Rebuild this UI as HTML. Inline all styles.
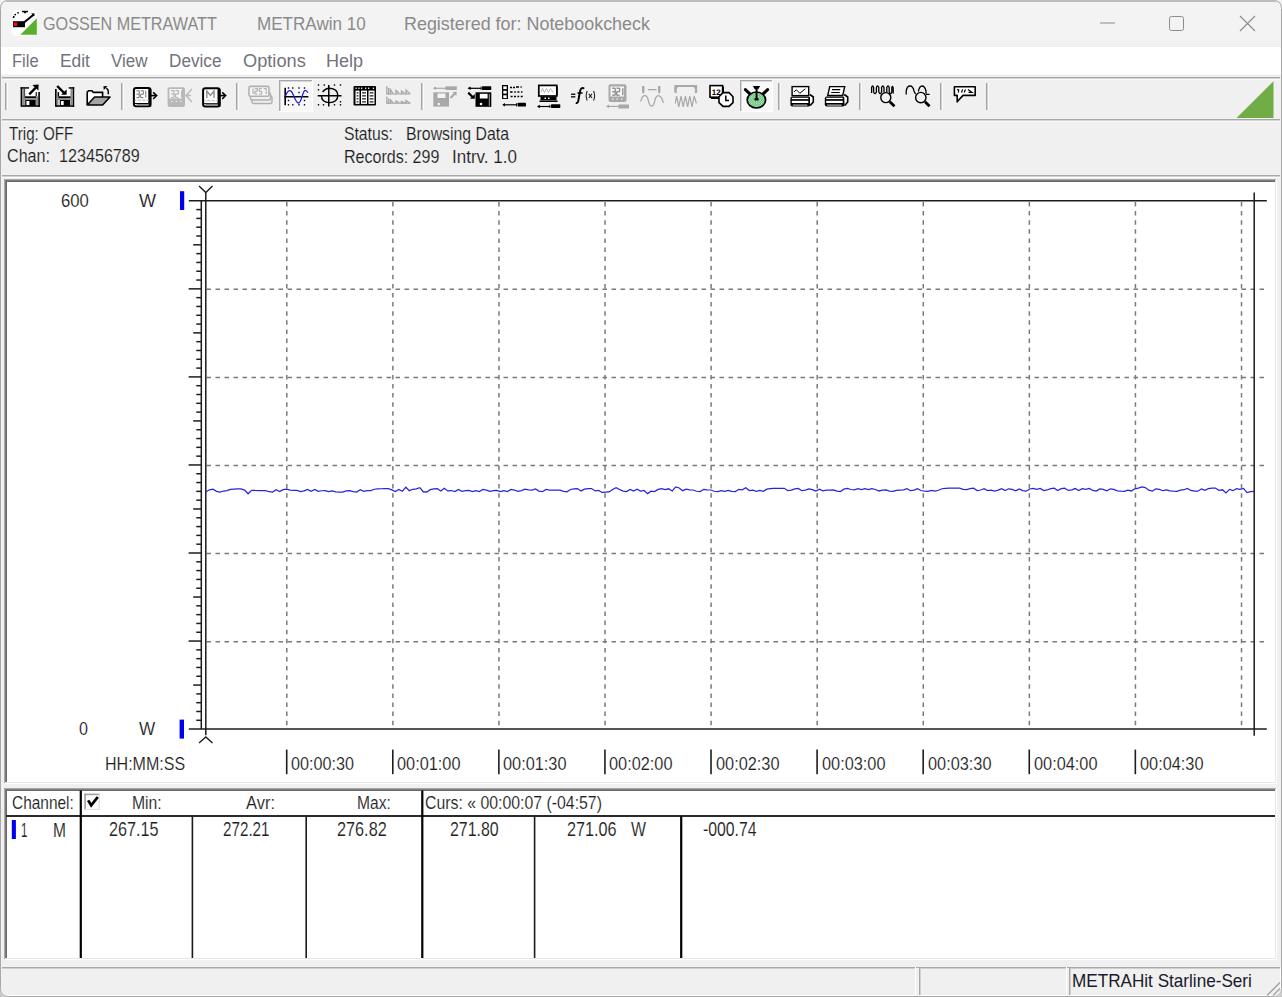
<!DOCTYPE html>
<html><head><meta charset="utf-8"><style>
html,body{margin:0;padding:0;width:1282px;height:997px;overflow:hidden;background:#f0f0f0}
.t{position:absolute;font-family:"Liberation Sans", sans-serif;line-height:1;white-space:pre;transform-origin:0 0}
svg{position:absolute;left:0;top:0}
</style></head><body>
<svg width="1282" height="997" viewBox="0 0 1282 997" shape-rendering="crispEdges"><rect x="0" y="0" width="1282" height="47" fill="#f3f3f3"/><rect x="0" y="41" width="1282" height="1" fill="#f0f0f0"/><rect x="0" y="43" width="1282" height="4" fill="#f1f1f1"/><rect x="0" y="47" width="1282" height="27" fill="#ffffff"/><rect x="0" y="74" width="1282" height="1" fill="#f8f8f8"/><rect x="0" y="75" width="1282" height="2" fill="#eeeeee"/><rect x="0" y="77" width="1282" height="920" fill="#f0f0f0"/><rect x="2" y="77" width="1278" height="1" fill="#a8a8a8"/><rect x="2" y="78" width="1278" height="1" fill="#d4d4d4"/><rect x="2" y="79" width="1278" height="1" fill="#fafafa"/><rect x="2" y="119" width="1278" height="1" fill="#a8a8a8"/><rect x="2" y="120" width="1278" height="1" fill="#d4d4d4"/><rect x="2" y="121" width="1278" height="1" fill="#fafafa"/><rect x="2" y="175" width="1278" height="1" fill="#a8a8a8"/><rect x="2" y="176" width="1278" height="1" fill="#d4d4d4"/><rect x="2" y="177" width="1278" height="1" fill="#fafafa"/><rect x="5" y="83" width="1" height="27" fill="#a4a4a4"/><rect x="6" y="83" width="1" height="27" fill="#d0d0d0"/><rect x="7" y="83" width="1" height="27" fill="#fbfbfb"/><rect x="121" y="83" width="1" height="27" fill="#a4a4a4"/><rect x="122" y="83" width="1" height="27" fill="#d0d0d0"/><rect x="123" y="83" width="1" height="27" fill="#fbfbfb"/><rect x="236" y="83" width="1" height="27" fill="#a4a4a4"/><rect x="237" y="83" width="1" height="27" fill="#d0d0d0"/><rect x="238" y="83" width="1" height="27" fill="#fbfbfb"/><rect x="421" y="83" width="1" height="27" fill="#a4a4a4"/><rect x="422" y="83" width="1" height="27" fill="#d0d0d0"/><rect x="423" y="83" width="1" height="27" fill="#fbfbfb"/><rect x="778" y="83" width="1" height="27" fill="#a4a4a4"/><rect x="779" y="83" width="1" height="27" fill="#d0d0d0"/><rect x="780" y="83" width="1" height="27" fill="#fbfbfb"/><rect x="859" y="83" width="1" height="27" fill="#a4a4a4"/><rect x="860" y="83" width="1" height="27" fill="#d0d0d0"/><rect x="861" y="83" width="1" height="27" fill="#fbfbfb"/><rect x="940" y="83" width="1" height="27" fill="#a4a4a4"/><rect x="941" y="83" width="1" height="27" fill="#d0d0d0"/><rect x="942" y="83" width="1" height="27" fill="#fbfbfb"/><rect x="986" y="83" width="1" height="27" fill="#a4a4a4"/><rect x="987" y="83" width="1" height="27" fill="#d0d0d0"/><rect x="988" y="83" width="1" height="27" fill="#fbfbfb"/><rect x="279" y="80" width="33" height="31" fill="#f8f8f8"/><rect x="279" y="80" width="33" height="1" fill="#a8a8a8"/><rect x="279" y="80" width="1" height="31" fill="#a8a8a8"/><rect x="280" y="81" width="32" height="1" fill="#d8d8d8"/><rect x="280" y="81" width="1" height="30" fill="#d8d8d8"/><rect x="312" y="80" width="1" height="32" fill="#ffffff"/><rect x="279" y="111" width="33" height="1" fill="#ffffff"/><rect x="740" y="80" width="32" height="31" fill="#f8f8f8"/><rect x="740" y="80" width="32" height="1" fill="#a8a8a8"/><rect x="740" y="80" width="1" height="31" fill="#a8a8a8"/><rect x="741" y="81" width="31" height="1" fill="#d8d8d8"/><rect x="741" y="81" width="1" height="30" fill="#d8d8d8"/><rect x="772" y="80" width="1" height="32" fill="#ffffff"/><rect x="740" y="111" width="32" height="1" fill="#ffffff"/><polygon points="1236.5,118 1273.5,81.2 1273.5,118" fill="#70ad47" shape-rendering="auto"/><rect x="4" y="179" width="1273" height="605" fill="#ffffff"/><rect x="5" y="180" width="1271" height="603" fill="#e6e6e6"/><rect x="4" y="179" width="1272" height="1" fill="#a8a8a8"/><rect x="4" y="179" width="1" height="604" fill="#a8a8a8"/><rect x="5" y="180" width="1270" height="1" fill="#7c7c7c"/><rect x="5" y="180" width="1" height="602" fill="#7c7c7c"/><rect x="6" y="181" width="1269" height="1" fill="#6a6a6a"/><rect x="6" y="181" width="1" height="601" fill="#6a6a6a"/><rect x="7" y="182" width="1268" height="600" fill="#ffffff"/><rect x="4" y="788" width="1273" height="172" fill="#ffffff"/><rect x="5" y="789" width="1271" height="170" fill="#e6e6e6"/><rect x="4" y="788" width="1272" height="1" fill="#a8a8a8"/><rect x="4" y="788" width="1" height="171" fill="#a8a8a8"/><rect x="5" y="789" width="1270" height="1" fill="#7c7c7c"/><rect x="5" y="789" width="1" height="169" fill="#7c7c7c"/><rect x="6" y="790" width="1269" height="1" fill="#6a6a6a"/><rect x="6" y="790" width="1" height="168" fill="#6a6a6a"/><rect x="7" y="791" width="1268" height="167" fill="#ffffff"/><rect x="2" y="967" width="1278" height="1" fill="#a8a8a8"/><rect x="2" y="967" width="913" height="1" fill="#a8a8a8"/><rect x="2" y="968" width="913" height="1" fill="#d0d0d0"/><rect x="915" y="967" width="1" height="29" fill="#ffffff"/><rect x="2" y="995" width="914" height="1" fill="#ffffff"/><rect x="919" y="967" width="147" height="1" fill="#a8a8a8"/><rect x="919" y="968" width="147" height="1" fill="#d0d0d0"/><rect x="919" y="967" width="1" height="29" fill="#a8a8a8"/><rect x="920" y="968" width="1" height="28" fill="#d0d0d0"/><rect x="1066" y="967" width="1" height="29" fill="#ffffff"/><rect x="919" y="995" width="148" height="1" fill="#ffffff"/><rect x="1069" y="967" width="211" height="1" fill="#a8a8a8"/><rect x="1069" y="968" width="211" height="1" fill="#d0d0d0"/><rect x="1069" y="967" width="1" height="29" fill="#a8a8a8"/><rect x="1070" y="968" width="1" height="28" fill="#d0d0d0"/><rect x="1280" y="967" width="1" height="29" fill="#ffffff"/><rect x="1069" y="995" width="212" height="1" fill="#ffffff"/><line x1="1273" y1="995.5" x2="1280" y2="988.5" stroke="#a0a0a0" stroke-width="1.3" shape-rendering="auto"/><line x1="1267" y1="995.5" x2="1280" y2="982.5" stroke="#a0a0a0" stroke-width="1.3" shape-rendering="auto"/><path d="M0,990 V997 H7 Q0.5,996.5 0,990 Z M1282,990 V997 H1275 Q1281.5,996.5 1282,990 Z" fill="#c8c8c8" shape-rendering="auto"/><path d="M0.5,988.5 V8.5 Q0.5,0.5 8.5,0.5 H1273.5 Q1281.5,0.5 1281.5,8.5 V988.5 Q1281.5,996.5 1273.5,996.5 H8.5 Q0.5,996.5 0.5,988.5 Z" fill="none" stroke="#a8a8a8" stroke-width="1" shape-rendering="auto"/><rect x="6" y="0" width="1270" height="2" fill="#bdbdbd"/></svg>
<svg width="1282" height="997" viewBox="0 0 1282 997"><line x1="206.5" y1="289.29999999999995" x2="1266.5" y2="289.29999999999995" stroke="#7a7a7a" stroke-width="1.5" stroke-dasharray="4.5,4.5"/><line x1="206.5" y1="377.4" x2="1266.5" y2="377.4" stroke="#7a7a7a" stroke-width="1.5" stroke-dasharray="4.5,4.5"/><line x1="206.5" y1="465.49999999999994" x2="1266.5" y2="465.49999999999994" stroke="#7a7a7a" stroke-width="1.5" stroke-dasharray="4.5,4.5"/><line x1="206.5" y1="553.5999999999999" x2="1266.5" y2="553.5999999999999" stroke="#7a7a7a" stroke-width="1.5" stroke-dasharray="4.5,4.5"/><line x1="206.5" y1="641.7" x2="1266.5" y2="641.7" stroke="#7a7a7a" stroke-width="1.5" stroke-dasharray="4.5,4.5"/><line x1="286.8" y1="202" x2="286.8" y2="728" stroke="#7a7a7a" stroke-width="1.5" stroke-dasharray="4.5,4.6"/><line x1="392.88" y1="202" x2="392.88" y2="728" stroke="#7a7a7a" stroke-width="1.5" stroke-dasharray="4.5,4.6"/><line x1="498.96000000000004" y1="202" x2="498.96000000000004" y2="728" stroke="#7a7a7a" stroke-width="1.5" stroke-dasharray="4.5,4.6"/><line x1="605.04" y1="202" x2="605.04" y2="728" stroke="#7a7a7a" stroke-width="1.5" stroke-dasharray="4.5,4.6"/><line x1="711.12" y1="202" x2="711.12" y2="728" stroke="#7a7a7a" stroke-width="1.5" stroke-dasharray="4.5,4.6"/><line x1="817.2" y1="202" x2="817.2" y2="728" stroke="#7a7a7a" stroke-width="1.5" stroke-dasharray="4.5,4.6"/><line x1="923.28" y1="202" x2="923.28" y2="728" stroke="#7a7a7a" stroke-width="1.5" stroke-dasharray="4.5,4.6"/><line x1="1029.36" y1="202" x2="1029.36" y2="728" stroke="#7a7a7a" stroke-width="1.5" stroke-dasharray="4.5,4.6"/><line x1="1135.44" y1="202" x2="1135.44" y2="728" stroke="#7a7a7a" stroke-width="1.5" stroke-dasharray="4.5,4.6"/><line x1="1241.52" y1="202" x2="1241.52" y2="728" stroke="#7a7a7a" stroke-width="1.5" stroke-dasharray="4.5,4.6"/><line x1="188.8" y1="200.8" x2="1266.8" y2="200.8" stroke="#1c1c1c" stroke-width="1.5" /><line x1="188.8" y1="729.1" x2="1266.8" y2="729.1" stroke="#1c1c1c" stroke-width="1.5" /><line x1="201.3" y1="200.8" x2="201.3" y2="729.1" stroke="#1c1c1c" stroke-width="1.5" /><line x1="205.8" y1="192.5" x2="205.8" y2="735.3" stroke="#1c1c1c" stroke-width="1.5" /><line x1="1254.2" y1="192.6" x2="1254.2" y2="735.7" stroke="#1c1c1c" stroke-width="1.5" /><line x1="196.3" y1="209.60500000000002" x2="201.3" y2="209.60500000000002" stroke="#1c1c1c" stroke-width="1.5" /><line x1="196.3" y1="218.41000000000003" x2="201.3" y2="218.41000000000003" stroke="#1c1c1c" stroke-width="1.5" /><line x1="196.3" y1="227.215" x2="201.3" y2="227.215" stroke="#1c1c1c" stroke-width="1.5" /><line x1="196.3" y1="236.02" x2="201.3" y2="236.02" stroke="#1c1c1c" stroke-width="1.5" /><line x1="193.2" y1="244.82500000000002" x2="201.3" y2="244.82500000000002" stroke="#1c1c1c" stroke-width="1.5" /><line x1="196.3" y1="253.63" x2="201.3" y2="253.63" stroke="#1c1c1c" stroke-width="1.5" /><line x1="196.3" y1="262.435" x2="201.3" y2="262.435" stroke="#1c1c1c" stroke-width="1.5" /><line x1="196.3" y1="271.24" x2="201.3" y2="271.24" stroke="#1c1c1c" stroke-width="1.5" /><line x1="196.3" y1="280.045" x2="201.3" y2="280.045" stroke="#1c1c1c" stroke-width="1.5" /><line x1="188.6" y1="288.85" x2="201.3" y2="288.85" stroke="#1c1c1c" stroke-width="1.5" /><line x1="196.3" y1="297.655" x2="201.3" y2="297.655" stroke="#1c1c1c" stroke-width="1.5" /><line x1="196.3" y1="306.46000000000004" x2="201.3" y2="306.46000000000004" stroke="#1c1c1c" stroke-width="1.5" /><line x1="196.3" y1="315.265" x2="201.3" y2="315.265" stroke="#1c1c1c" stroke-width="1.5" /><line x1="196.3" y1="324.07" x2="201.3" y2="324.07" stroke="#1c1c1c" stroke-width="1.5" /><line x1="193.2" y1="332.875" x2="201.3" y2="332.875" stroke="#1c1c1c" stroke-width="1.5" /><line x1="196.3" y1="341.68" x2="201.3" y2="341.68" stroke="#1c1c1c" stroke-width="1.5" /><line x1="196.3" y1="350.485" x2="201.3" y2="350.485" stroke="#1c1c1c" stroke-width="1.5" /><line x1="196.3" y1="359.28999999999996" x2="201.3" y2="359.28999999999996" stroke="#1c1c1c" stroke-width="1.5" /><line x1="196.3" y1="368.095" x2="201.3" y2="368.095" stroke="#1c1c1c" stroke-width="1.5" /><line x1="188.6" y1="376.9" x2="201.3" y2="376.9" stroke="#1c1c1c" stroke-width="1.5" /><line x1="196.3" y1="385.70500000000004" x2="201.3" y2="385.70500000000004" stroke="#1c1c1c" stroke-width="1.5" /><line x1="196.3" y1="394.51" x2="201.3" y2="394.51" stroke="#1c1c1c" stroke-width="1.5" /><line x1="196.3" y1="403.315" x2="201.3" y2="403.315" stroke="#1c1c1c" stroke-width="1.5" /><line x1="196.3" y1="412.12" x2="201.3" y2="412.12" stroke="#1c1c1c" stroke-width="1.5" /><line x1="193.2" y1="420.92499999999995" x2="201.3" y2="420.92499999999995" stroke="#1c1c1c" stroke-width="1.5" /><line x1="196.3" y1="429.73" x2="201.3" y2="429.73" stroke="#1c1c1c" stroke-width="1.5" /><line x1="196.3" y1="438.53499999999997" x2="201.3" y2="438.53499999999997" stroke="#1c1c1c" stroke-width="1.5" /><line x1="196.3" y1="447.34" x2="201.3" y2="447.34" stroke="#1c1c1c" stroke-width="1.5" /><line x1="196.3" y1="456.145" x2="201.3" y2="456.145" stroke="#1c1c1c" stroke-width="1.5" /><line x1="188.6" y1="464.95" x2="201.3" y2="464.95" stroke="#1c1c1c" stroke-width="1.5" /><line x1="196.3" y1="473.755" x2="201.3" y2="473.755" stroke="#1c1c1c" stroke-width="1.5" /><line x1="196.3" y1="482.56" x2="201.3" y2="482.56" stroke="#1c1c1c" stroke-width="1.5" /><line x1="196.3" y1="491.36499999999995" x2="201.3" y2="491.36499999999995" stroke="#1c1c1c" stroke-width="1.5" /><line x1="196.3" y1="500.16999999999996" x2="201.3" y2="500.16999999999996" stroke="#1c1c1c" stroke-width="1.5" /><line x1="193.2" y1="508.975" x2="201.3" y2="508.975" stroke="#1c1c1c" stroke-width="1.5" /><line x1="196.3" y1="517.78" x2="201.3" y2="517.78" stroke="#1c1c1c" stroke-width="1.5" /><line x1="196.3" y1="526.585" x2="201.3" y2="526.585" stroke="#1c1c1c" stroke-width="1.5" /><line x1="196.3" y1="535.39" x2="201.3" y2="535.39" stroke="#1c1c1c" stroke-width="1.5" /><line x1="196.3" y1="544.1949999999999" x2="201.3" y2="544.1949999999999" stroke="#1c1c1c" stroke-width="1.5" /><line x1="188.6" y1="553.0" x2="201.3" y2="553.0" stroke="#1c1c1c" stroke-width="1.5" /><line x1="196.3" y1="561.8050000000001" x2="201.3" y2="561.8050000000001" stroke="#1c1c1c" stroke-width="1.5" /><line x1="196.3" y1="570.61" x2="201.3" y2="570.61" stroke="#1c1c1c" stroke-width="1.5" /><line x1="196.3" y1="579.415" x2="201.3" y2="579.415" stroke="#1c1c1c" stroke-width="1.5" /><line x1="196.3" y1="588.22" x2="201.3" y2="588.22" stroke="#1c1c1c" stroke-width="1.5" /><line x1="193.2" y1="597.025" x2="201.3" y2="597.025" stroke="#1c1c1c" stroke-width="1.5" /><line x1="196.3" y1="605.8299999999999" x2="201.3" y2="605.8299999999999" stroke="#1c1c1c" stroke-width="1.5" /><line x1="196.3" y1="614.635" x2="201.3" y2="614.635" stroke="#1c1c1c" stroke-width="1.5" /><line x1="196.3" y1="623.44" x2="201.3" y2="623.44" stroke="#1c1c1c" stroke-width="1.5" /><line x1="196.3" y1="632.2449999999999" x2="201.3" y2="632.2449999999999" stroke="#1c1c1c" stroke-width="1.5" /><line x1="188.6" y1="641.05" x2="201.3" y2="641.05" stroke="#1c1c1c" stroke-width="1.5" /><line x1="196.3" y1="649.855" x2="201.3" y2="649.855" stroke="#1c1c1c" stroke-width="1.5" /><line x1="196.3" y1="658.66" x2="201.3" y2="658.66" stroke="#1c1c1c" stroke-width="1.5" /><line x1="196.3" y1="667.4649999999999" x2="201.3" y2="667.4649999999999" stroke="#1c1c1c" stroke-width="1.5" /><line x1="196.3" y1="676.27" x2="201.3" y2="676.27" stroke="#1c1c1c" stroke-width="1.5" /><line x1="193.2" y1="685.0749999999999" x2="201.3" y2="685.0749999999999" stroke="#1c1c1c" stroke-width="1.5" /><line x1="196.3" y1="693.8799999999999" x2="201.3" y2="693.8799999999999" stroke="#1c1c1c" stroke-width="1.5" /><line x1="196.3" y1="702.685" x2="201.3" y2="702.685" stroke="#1c1c1c" stroke-width="1.5" /><line x1="196.3" y1="711.49" x2="201.3" y2="711.49" stroke="#1c1c1c" stroke-width="1.5" /><line x1="196.3" y1="720.2950000000001" x2="201.3" y2="720.2950000000001" stroke="#1c1c1c" stroke-width="1.5" /><path d="M199,186 L205.8,192.6 L212.5,186" fill="none" stroke="#1c1c1c" stroke-width="1.4"/><path d="M199,743 L205.8,737 L212.5,743" fill="none" stroke="#1c1c1c" stroke-width="1.4"/><rect x="180" y="191.2" width="4.2" height="18.8" fill="#0000f0"/><rect x="179.6" y="719.6" width="4.4" height="19" fill="#0000f0"/><rect x="11.8" y="820" width="4.1" height="19" fill="#0000f0"/><line x1="286.7" y1="749.6" x2="286.7" y2="774.2" stroke="#1c1c1c" stroke-width="1.6" /><line x1="392.78" y1="749.6" x2="392.78" y2="774.2" stroke="#1c1c1c" stroke-width="1.6" /><line x1="498.86" y1="749.6" x2="498.86" y2="774.2" stroke="#1c1c1c" stroke-width="1.6" /><line x1="604.94" y1="749.6" x2="604.94" y2="774.2" stroke="#1c1c1c" stroke-width="1.6" /><line x1="711.02" y1="749.6" x2="711.02" y2="774.2" stroke="#1c1c1c" stroke-width="1.6" /><line x1="817.0999999999999" y1="749.6" x2="817.0999999999999" y2="774.2" stroke="#1c1c1c" stroke-width="1.6" /><line x1="923.1800000000001" y1="749.6" x2="923.1800000000001" y2="774.2" stroke="#1c1c1c" stroke-width="1.6" /><line x1="1029.26" y1="749.6" x2="1029.26" y2="774.2" stroke="#1c1c1c" stroke-width="1.6" /><line x1="1135.34" y1="749.6" x2="1135.34" y2="774.2" stroke="#1c1c1c" stroke-width="1.6" /><polyline points="206.0,491.80 209.5,489.76 213.0,489.14 216.5,491.35 220.0,492.01 223.5,491.01 227.0,490.71 230.5,489.41 234.0,489.02 237.5,488.90 241.0,488.86 244.6,490.05 248.1,493.80 251.6,490.33 255.1,490.48 258.6,490.52 262.1,490.54 265.6,490.54 269.1,491.73 272.6,492.09 276.1,489.79 279.6,491.50 283.1,489.61 286.6,489.04 290.1,490.07 293.6,490.38 297.1,490.46 300.6,491.69 304.1,490.85 307.6,489.40 311.1,491.36 314.7,489.55 318.2,491.40 321.7,490.75 325.2,490.56 328.7,491.70 332.2,490.83 335.7,491.77 339.2,492.05 342.7,492.13 346.2,490.96 349.7,490.60 353.2,491.69 356.7,492.02 360.2,489.71 363.7,491.42 367.2,490.73 370.7,490.52 374.2,489.25 377.7,488.87 381.2,488.75 384.8,488.71 388.3,488.70 391.8,489.89 395.3,491.45 398.8,489.51 402.3,491.33 405.8,487.27 409.3,490.65 412.8,489.26 416.3,488.84 419.8,487.71 423.3,491.77 426.8,491.99 430.3,489.65 433.8,488.95 437.3,488.73 440.8,491.07 444.3,488.36 447.8,490.95 451.3,490.52 454.9,491.59 458.4,489.51 461.9,491.28 465.4,490.61 468.9,490.41 472.4,491.55 475.9,490.68 479.4,491.62 482.9,489.50 486.4,490.06 489.9,491.43 493.4,490.64 496.9,490.40 500.4,491.52 503.9,490.66 507.4,491.59 510.9,489.47 514.4,490.03 517.9,491.40 521.4,490.61 525.0,489.17 528.5,489.93 532.0,490.16 535.5,489.02 539.0,491.08 542.5,491.70 546.0,489.48 549.5,490.01 553.0,490.17 556.5,490.21 560.0,490.22 563.5,491.42 567.0,491.78 570.5,489.49 574.0,488.79 577.5,488.58 581.0,490.92 584.5,489.22 588.0,488.70 591.5,488.55 595.1,490.90 598.6,490.40 602.1,492.45 605.6,492.06 609.1,491.94 612.6,489.50 616.1,487.77 619.6,489.45 623.1,491.15 626.6,491.65 630.1,489.40 633.6,491.13 637.1,489.24 640.6,491.07 644.1,490.42 647.6,493.62 651.1,491.18 654.6,491.64 658.1,489.38 661.6,488.70 665.2,489.69 668.7,488.79 672.2,490.91 675.7,486.95 679.2,487.96 682.7,490.66 686.2,489.06 689.7,489.78 693.2,490.00 696.7,491.26 700.2,491.63 703.7,489.34 707.2,489.85 710.7,490.00 714.2,491.25 717.7,491.62 721.2,490.53 724.7,491.40 728.2,490.45 731.7,491.37 735.3,491.64 738.8,489.32 742.3,489.82 745.8,487.77 749.3,490.55 752.8,490.18 756.3,491.27 759.8,490.39 763.3,491.33 766.8,489.21 770.3,488.57 773.8,488.37 777.3,488.31 780.8,488.29 784.3,488.28 787.8,490.68 791.3,490.19 794.8,488.84 798.3,488.44 801.8,490.71 805.4,490.19 808.9,488.83 812.4,489.62 815.9,491.06 819.4,489.09 822.9,490.89 826.4,490.23 829.9,490.03 833.4,489.97 836.9,491.15 840.4,491.50 843.9,489.20 847.4,488.51 850.9,489.50 854.4,489.79 857.9,488.68 861.4,489.54 864.9,488.60 868.4,489.51 871.9,488.58 875.5,489.50 879.0,490.98 882.5,490.21 886.0,489.98 889.5,491.11 893.0,491.45 896.5,490.35 900.0,490.01 903.5,489.91 907.0,488.68 910.5,490.70 914.0,490.11 917.5,488.73 921.0,490.51 924.5,491.24 928.0,491.46 931.5,490.32 935.0,491.18 938.5,490.23 942.0,488.75 945.6,488.30 949.1,488.16 952.6,488.12 956.1,488.10 959.6,488.10 963.1,489.29 966.6,489.65 970.1,488.55 973.6,488.22 977.1,490.52 980.6,490.01 984.1,488.65 987.6,490.64 991.1,490.03 994.6,491.05 998.1,490.15 1001.6,488.68 1005.1,490.64 1008.6,488.82 1012.1,489.47 1015.7,490.87 1019.2,488.88 1022.7,490.68 1026.2,491.22 1029.7,488.98 1033.2,488.31 1036.7,489.30 1040.2,488.40 1043.7,490.52 1047.2,489.96 1050.7,488.59 1054.2,488.17 1057.7,490.44 1061.2,488.72 1064.7,488.21 1068.2,490.45 1071.7,489.92 1075.2,488.56 1078.7,490.54 1082.3,488.74 1085.8,489.39 1089.3,488.39 1092.8,490.48 1096.3,491.11 1099.8,488.90 1103.3,489.43 1106.8,490.79 1110.3,488.79 1113.8,489.39 1117.3,490.77 1120.8,491.18 1124.3,491.30 1127.8,490.13 1131.3,490.98 1134.8,488.83 1138.3,488.18 1141.8,486.99 1145.3,487.62 1148.8,490.21 1152.4,490.99 1155.9,488.82 1159.4,489.36 1162.9,490.72 1166.4,489.93 1169.9,490.89 1173.4,491.18 1176.9,491.26 1180.4,490.08 1183.9,489.72 1187.4,488.42 1190.9,490.42 1194.4,491.02 1197.9,491.20 1201.4,488.85 1204.9,490.34 1208.4,488.58 1211.9,488.06 1215.4,488.09 1218.9,490.30 1222.5,489.76 1226.0,493.00 1229.5,489.37 1233.0,490.67 1236.5,488.66 1240.0,489.26 1243.5,488.43 1247.0,492.58 1250.5,491.63 1254.0,491.34" fill="none" stroke="#2626d8" stroke-width="1.25" stroke-linejoin="miter"/><line x1="6" y1="816" x2="1275" y2="816" stroke="#2a2a2a" stroke-width="1.8" /><line x1="80.8" y1="790.5" x2="80.8" y2="958" stroke="#000" stroke-width="2.2" /><line x1="422.3" y1="790.5" x2="422.3" y2="958" stroke="#000" stroke-width="2.2" /><line x1="681.2" y1="816" x2="681.2" y2="958" stroke="#000" stroke-width="2.2" /><line x1="192.4" y1="816.5" x2="192.4" y2="958" stroke="#1a1a1a" stroke-width="1.6" /><line x1="306.2" y1="816.5" x2="306.2" y2="958" stroke="#1a1a1a" stroke-width="1.6" /><line x1="534.6" y1="816.5" x2="534.6" y2="958" stroke="#1a1a1a" stroke-width="1.6" /><rect x="84.3" y="793.6" width="15.6" height="16.6" fill="#ffffff"/><rect x="84.3" y="793.6" width="15.6" height="1.6" fill="#a0a0a0"/><rect x="84.3" y="793.6" width="1.6" height="16.6" fill="#a0a0a0"/><rect x="84.3" y="808.8" width="15.6" height="1.2" fill="#e3e3e3"/><rect x="98.6" y="793.6" width="1.3" height="16.6" fill="#e3e3e3"/><path d="M88.2,800.4 L91.2,805.4 L97.8,797" fill="none" stroke="#000" stroke-width="2.8"/></svg>
<svg width="1282" height="997" viewBox="0 0 1282 997"><rect x="12" y="10" width="25" height="26" rx="4" fill="#ffffff" opacity="0.9"/><polygon points="20.3,34.8 36.8,18.3 36.8,34.8" fill="#58b02e"/><rect x="13" y="21.2" width="12" height="6" fill="#000"/><rect x="13.6" y="22.4" width="3.6" height="3.6" fill="#e8101a"/><path d="M24,22.6 L33.8,14.4" stroke="#000" stroke-width="2" fill="none"/><polygon points="31.2,13.2 34.6,13.4 34.2,16.6" fill="#000"/><rect x="22" y="10.8" width="6" height="1.4" fill="#000"/><polygon points="23.5,12 26.5,12 25,13.8" fill="#000"/><circle cx="18" cy="12.8" r="0.9" fill="#000"/><circle cx="15.2" cy="14.6" r="0.9" fill="#000"/><path d="M13.3,18 L14,15.9" stroke="#000" stroke-width="1.6"/><rect x="1100" y="22.5" width="15" height="1" fill="#8c8c8c"/><rect x="1169.5" y="16.5" width="14" height="14" rx="2" fill="none" stroke="#8c8c8c" stroke-width="1"/><path d="M1240,16 L1255,31 M1255,16 L1240,31" stroke="#8c8c8c" stroke-width="1.1" fill="none"/><rect x="20.6" y="87.2" width="8.40" height="1.60" fill="#000"/><rect x="20.6" y="87.2" width="1.60" height="19.60" fill="#000"/><rect x="22.2" y="88.8" width="2.60" height="16.20" fill="#8c8c8c"/><rect x="24.5" y="88.8" width="0.80" height="7.50" fill="#000"/><rect x="25.3" y="88.8" width="10.40" height="7.50" fill="#fff"/><rect x="24.6" y="96.3" width="11.60" height="1.90" fill="#000"/><rect x="22.2" y="98.2" width="16.10" height="1.80" fill="#8c8c8c"/><rect x="25.2" y="100" width="10.50" height="5.80" fill="#000"/><rect x="26.4" y="101" width="3.00" height="4.20" fill="#fff"/><rect x="35.7" y="92.2" width="1.10" height="4.10" fill="#000"/><rect x="36.0" y="96.3" width="2.30" height="8.70" fill="#8c8c8c"/><rect x="38.3" y="92.0" width="1.60" height="14.80" fill="#000"/><rect x="21.6" y="105.2" width="18.30" height="1.60" fill="#000"/><path d="M29.2,94.4 L35.8,87.6" stroke="#000" stroke-width="2.3"/><polygon points="32.4,84.9 38.6,84.6 38.4,90.6" fill="#000"/><rect x="68.7" y="87.2" width="5.50" height="1.60" fill="#000"/><rect x="72.6" y="87.2" width="1.60" height="19.60" fill="#000"/><rect x="70.3" y="88.8" width="2.30" height="16.20" fill="#8c8c8c"/><rect x="55.0" y="89.0" width="1.70" height="17.80" fill="#000"/><rect x="56.7" y="92.2" width="1.70" height="12.80" fill="#8c8c8c"/><rect x="58.0" y="92.2" width="1.30" height="4.40" fill="#000"/><rect x="59.3" y="88.8" width="11.00" height="7.50" fill="#fff"/><rect x="58.4" y="96.3" width="12.10" height="1.70" fill="#000"/><rect x="56.7" y="98.0" width="15.90" height="2.00" fill="#8c8c8c"/><rect x="59.8" y="100" width="10.20" height="5.80" fill="#000"/><rect x="60.9" y="101" width="2.80" height="4.20" fill="#fff"/><rect x="55.6" y="105.2" width="18.60" height="1.60" fill="#000"/><path d="M57.2,86 L63.8,92.6" stroke="#000" stroke-width="2.4"/><polygon points="61.1,94.7 66.6,94.7 66.6,89.2" fill="#000"/><path d="M87.2,105 V92.2 L88.6,90.8 H92 L93.3,92.4 H102.6 V97" fill="#fff" stroke="#000" stroke-width="1.6"/><path d="M87.2,105 L94.6,97 H110 L102.6,105 Z" fill="#a4a4a4" stroke="#000" stroke-width="1.6" stroke-linejoin="round"/><path d="M108.3,94.3 V91 Q108,89.2 106.2,88.2" stroke="#000" stroke-width="1.5" fill="none"/><polygon points="103.4,86.2 107.6,86 103.8,90" fill="#000"/><rect x="133.9" y="88.10000000000001" width="16.6" height="18.2" rx="2.2" fill="#fff" stroke="#000" stroke-width="2"/><rect x="148.3" y="89.0" width="2.9" height="17.6" fill="#000"/><rect x="136.6" y="104.0" width="12" height="1.6" fill="#8a8a8a"/><rect x="134.8" y="103.0" width="13.8" height="1" fill="#000"/><rect x="134.8" y="99.60000000000001" width="13.6" height="1.5" fill="#c8c8c8"/><path d="M136.2,100.35000000000001 h11" stroke="#fff" stroke-width="1" stroke-dasharray="1.6,3"/><line x1="136.40" y1="90.80" x2="139.20" y2="90.80" stroke="#8c8c8c" stroke-width="1.2"/><line x1="139.20" y1="90.80" x2="139.20" y2="94.20" stroke="#8c8c8c" stroke-width="1.2"/><line x1="136.40" y1="94.20" x2="139.20" y2="94.20" stroke="#8c8c8c" stroke-width="1.2"/><line x1="139.20" y1="94.20" x2="139.20" y2="97.60" stroke="#8c8c8c" stroke-width="1.2"/><line x1="136.40" y1="97.60" x2="139.20" y2="97.60" stroke="#8c8c8c" stroke-width="1.2"/><line x1="140.60" y1="90.80" x2="143.40" y2="90.80" stroke="#8c8c8c" stroke-width="1.2"/><line x1="143.40" y1="90.80" x2="143.40" y2="94.20" stroke="#8c8c8c" stroke-width="1.2"/><line x1="140.60" y1="94.20" x2="143.40" y2="94.20" stroke="#8c8c8c" stroke-width="1.2"/><line x1="140.60" y1="94.20" x2="140.60" y2="97.60" stroke="#8c8c8c" stroke-width="1.2"/><line x1="140.60" y1="97.60" x2="143.40" y2="97.60" stroke="#8c8c8c" stroke-width="1.2"/><line x1="145.70" y1="90.80" x2="145.70" y2="94.20" stroke="#8c8c8c" stroke-width="1.2"/><line x1="145.70" y1="94.20" x2="145.70" y2="97.60" stroke="#8c8c8c" stroke-width="1.2"/><path d="M151,95.6 H156" stroke="#000" stroke-width="1.6"/><path d="M153.2,92.4 L156.6,95.6 L153.2,99" stroke="#000" stroke-width="1.6" fill="none"/><rect x="167.6" y="87.3" width="17.4" height="19.7" rx="2" fill="#b8b8b8"/><rect x="169.4" y="89" width="12.5" height="9.5" fill="#f4f4f4"/><line x1="171.00" y1="90.60" x2="174.00" y2="90.60" stroke="#b8b8b8" stroke-width="1.3"/><line x1="174.00" y1="90.60" x2="174.00" y2="94.10" stroke="#b8b8b8" stroke-width="1.3"/><line x1="171.00" y1="94.10" x2="174.00" y2="94.10" stroke="#b8b8b8" stroke-width="1.3"/><line x1="174.00" y1="94.10" x2="174.00" y2="97.60" stroke="#b8b8b8" stroke-width="1.3"/><line x1="171.00" y1="97.60" x2="174.00" y2="97.60" stroke="#b8b8b8" stroke-width="1.3"/><line x1="175.40" y1="90.60" x2="178.40" y2="90.60" stroke="#b8b8b8" stroke-width="1.3"/><line x1="178.40" y1="90.60" x2="178.40" y2="94.10" stroke="#b8b8b8" stroke-width="1.3"/><line x1="175.40" y1="94.10" x2="178.40" y2="94.10" stroke="#b8b8b8" stroke-width="1.3"/><line x1="175.40" y1="94.10" x2="175.40" y2="97.60" stroke="#b8b8b8" stroke-width="1.3"/><line x1="175.40" y1="97.60" x2="178.40" y2="97.60" stroke="#b8b8b8" stroke-width="1.3"/><line x1="181.60" y1="90.60" x2="181.60" y2="94.10" stroke="#b8b8b8" stroke-width="1.3"/><line x1="181.60" y1="94.10" x2="181.60" y2="97.60" stroke="#b8b8b8" stroke-width="1.3"/><path d="M171,101.3 h11" stroke="#e8e8e8" stroke-width="1.3" stroke-dasharray="1.6,3"/><path d="M192,89 L186,95.5 L192,102 M186,95.5 H191" stroke="#b8b8b8" stroke-width="1.4" fill="none"/><rect x="203.1" y="88.30000000000001" width="16.6" height="18.2" rx="2.2" fill="#fff" stroke="#000" stroke-width="2"/><rect x="217.5" y="89.2" width="2.9" height="17.6" fill="#000"/><rect x="205.79999999999998" y="104.2" width="12" height="1.6" fill="#8a8a8a"/><rect x="204.0" y="103.2" width="13.8" height="1" fill="#000"/><rect x="204.0" y="99.80000000000001" width="13.6" height="1.5" fill="#c8c8c8"/><path d="M205.39999999999998,100.55000000000001 h11" stroke="#fff" stroke-width="1" stroke-dasharray="1.6,3"/><path d="M206.79999999999998,98.0 V91.0 L210.39999999999998,95.4 L214.0,91.0 V98.0" stroke="#8c8c8c" stroke-width="1.4" fill="none"/><path d="M220,95.6 H225" stroke="#000" stroke-width="1.6"/><path d="M222.2,92.4 L225.6,95.6 L222.2,99" stroke="#000" stroke-width="1.6" fill="none"/><rect x="252" y="96" width="20" height="7.5" rx="1.5" fill="none" stroke="#b0b0b0" stroke-width="1.4"/><rect x="250.5" y="93" width="20" height="7" rx="1.5" fill="#f0f0f0" stroke="#b0b0b0" stroke-width="1.4"/><rect x="249" y="86.4" width="20" height="9.8" rx="1.5" fill="#f6f6f6" stroke="#b0b0b0" stroke-width="1.6"/><line x1="253.00" y1="88.60" x2="253.00" y2="91.30" stroke="#b0b0b0" stroke-width="1.2"/><line x1="253.00" y1="91.30" x2="253.00" y2="94.00" stroke="#b0b0b0" stroke-width="1.2"/><line x1="254.80" y1="88.60" x2="257.40" y2="88.60" stroke="#b0b0b0" stroke-width="1.2"/><line x1="257.40" y1="88.60" x2="257.40" y2="91.30" stroke="#b0b0b0" stroke-width="1.2"/><line x1="254.80" y1="91.30" x2="257.40" y2="91.30" stroke="#b0b0b0" stroke-width="1.2"/><line x1="254.80" y1="91.30" x2="254.80" y2="94.00" stroke="#b0b0b0" stroke-width="1.2"/><line x1="254.80" y1="94.00" x2="257.40" y2="94.00" stroke="#b0b0b0" stroke-width="1.2"/><line x1="259.20" y1="88.60" x2="261.80" y2="88.60" stroke="#b0b0b0" stroke-width="1.2"/><line x1="259.20" y1="88.60" x2="259.20" y2="91.30" stroke="#b0b0b0" stroke-width="1.2"/><line x1="259.20" y1="91.30" x2="261.80" y2="91.30" stroke="#b0b0b0" stroke-width="1.2"/><line x1="261.80" y1="91.30" x2="261.80" y2="94.00" stroke="#b0b0b0" stroke-width="1.2"/><line x1="259.20" y1="94.00" x2="261.80" y2="94.00" stroke="#b0b0b0" stroke-width="1.2"/><line x1="263.60" y1="88.60" x2="266.20" y2="88.60" stroke="#b0b0b0" stroke-width="1.2"/><line x1="266.20" y1="88.60" x2="266.20" y2="91.30" stroke="#b0b0b0" stroke-width="1.2"/><line x1="266.20" y1="91.30" x2="266.20" y2="94.00" stroke="#b0b0b0" stroke-width="1.2"/><rect x="284.4" y="87.8" width="1.6" height="17.4" fill="#000"/><rect x="284.4" y="96" width="24" height="1.5" fill="#000"/><rect x="287.8" y="87.3" width="1.4" height="1.4" fill="#000"/><rect x="292.1" y="87.3" width="1.4" height="1.4" fill="#000"/><rect x="298.3" y="87.3" width="1.4" height="1.4" fill="#000"/><rect x="303.8" y="87.3" width="1.4" height="1.4" fill="#000"/><rect x="298.3" y="91.8" width="1.4" height="1.4" fill="#000"/><rect x="287.8" y="99.8" width="1.4" height="1.4" fill="#000"/><rect x="303.8" y="99.8" width="1.4" height="1.4" fill="#000"/><rect x="287.8" y="104.1" width="1.4" height="1.4" fill="#000"/><rect x="292.1" y="104.1" width="1.4" height="1.4" fill="#000"/><rect x="298.3" y="104.1" width="1.4" height="1.4" fill="#000"/><rect x="303.8" y="104.1" width="1.4" height="1.4" fill="#000"/><path d="M285.6,95.5 C287.5,91 289.5,89.5 291.5,91.5 C293.5,94 295.5,103 298.5,103 C301.5,103 302.5,91 305,90.4 C306.2,90.2 307.2,91.5 307.9,92.6" stroke="#2020e0" stroke-width="1.3" fill="none"/><path d="M322.6,92 Q325.5,88.2 329.5,88.2 Q337.8,88.6 337.8,95.6 Q337.6,102.6 329.5,102.6 Q321.4,102.6 321.4,95.6" fill="none" stroke="#000" stroke-width="1.4"/><rect x="317.7" y="95" width="23.8" height="1.5" fill="#000"/><rect x="328" y="85" width="1.5" height="21.5" fill="#000"/><rect x="317.8" y="84.3" width="1.4" height="1.4" fill="#000"/><rect x="323.6" y="84.3" width="1.4" height="1.4" fill="#000"/><rect x="333.8" y="84.3" width="1.4" height="1.4" fill="#000"/><rect x="339.8" y="84.3" width="1.4" height="1.4" fill="#000"/><rect x="317.8" y="89.1" width="1.4" height="1.4" fill="#000"/><rect x="339.8" y="101.1" width="1.4" height="1.4" fill="#000"/><rect x="317.8" y="104.1" width="1.4" height="1.4" fill="#000"/><rect x="322.8" y="104.1" width="1.4" height="1.4" fill="#000"/><rect x="333.8" y="104.1" width="1.4" height="1.4" fill="#000"/><rect x="339.8" y="104.1" width="1.4" height="1.4" fill="#000"/><rect x="353.5" y="86" width="22.5" height="19.5" rx="1" fill="#000"/><rect x="355.5" y="90.6" width="4.0" height="13.3" fill="#fff"/><rect x="356.6" y="92.2" width="1.7999999999999998" height="1.3" fill="#222"/><rect x="356.6" y="95.2" width="1.7999999999999998" height="1.3" fill="#222"/><rect x="356.6" y="98.2" width="1.7999999999999998" height="1.3" fill="#222"/><rect x="356.6" y="101.2" width="1.7999999999999998" height="1.3" fill="#222"/><rect x="361" y="90.6" width="6" height="13.3" fill="#fff"/><rect x="362.1" y="92.2" width="3.8" height="1.3" fill="#222"/><rect x="362.1" y="95.2" width="3.8" height="1.3" fill="#222"/><rect x="362.1" y="98.2" width="3.8" height="1.3" fill="#222"/><rect x="362.1" y="101.2" width="3.8" height="1.3" fill="#222"/><rect x="368.5" y="90.6" width="6.0" height="13.3" fill="#fff"/><rect x="369.6" y="92.2" width="3.8" height="1.3" fill="#222"/><rect x="369.6" y="95.2" width="3.8" height="1.3" fill="#222"/><rect x="369.6" y="98.2" width="3.8" height="1.3" fill="#222"/><rect x="369.6" y="101.2" width="3.8" height="1.3" fill="#222"/><rect x="355.4" y="87.6" width="1.3" height="1.3" fill="#fff"/><rect x="358.2" y="87.6" width="1.3" height="1.3" fill="#fff"/><rect x="361.0" y="87.6" width="1.3" height="1.3" fill="#fff"/><rect x="365.0" y="87.6" width="1.3" height="1.3" fill="#fff"/><rect x="368.0" y="87.6" width="1.3" height="1.3" fill="#fff"/><rect x="372.79999999999995" y="87.6" width="1.3" height="1.3" fill="#fff"/><rect x="386.5" y="93.3" width="24" height="1.2" fill="#a8a8a8"/><path d="M386.8,94.5 V86 M388.6,94.5 V88 M390.4,94.5 V89.5 L393,93.5 M396,94.5 V90.5 L399,93.0 M401.5,94.5 V91 L405,93.5 M406,94.5 V90 L410,93.9" stroke="#a8a8a8" stroke-width="1.3" fill="none"/><rect x="386.5" y="102.6" width="24" height="1.2" fill="#a8a8a8"/><path d="M386.8,103.8 V96.5 M388.6,103.8 V98.5 M390.4,103.8 V100.0 L393,102.8 M396,103.8 V101.0 L399,102.3 M401.5,103.8 V101.5 L405,102.8 M406,103.8 V100.5 L410,103.2" stroke="#a8a8a8" stroke-width="1.3" fill="none"/><path d="M434,88.3 H446" stroke="#a8a8a8" stroke-width="1.2"/><polygon points="433,88.3 436,86.5 436,90.1" fill="#a8a8a8"/><rect x="445.5" y="86.3" width="11.3" height="3.7" fill="#a8a8a8"/><rect x="433.3" y="92.3" width="15.7" height="14.3" fill="#a8a8a8"/><rect x="437.5" y="93.5" width="8" height="4.5" fill="#f4f4f4"/><circle cx="438.8" cy="104" r="1.3" fill="#f4f4f4"/><path d="M450.5,98 L455.4,93" stroke="#a8a8a8" stroke-width="2"/><polygon points="452.5,92 456.6,91.8 456.4,96" fill="#a8a8a8"/><path d="M468.5,88.3 H481" stroke="#000" stroke-width="1.2"/><polygon points="467.6,88.3 470.6,86.5 470.6,90.1" fill="#000"/><rect x="480.6" y="86.6" width="0.9" height="3.2" fill="#000"/><rect x="481.8" y="86.3" width="9.5" height="3.7" rx="0.8" fill="#000"/><rect x="475.5" y="92.3" width="15.8" height="14.5" fill="#000"/><rect x="479.8" y="93.8" width="7.8" height="4.7" fill="#fff"/><rect x="488.8" y="94" width="1" height="12" fill="#a0a0a0"/><circle cx="481" cy="104" r="1.3" fill="#fff"/><path d="M468.2,92.6 L472.8,97.2" stroke="#000" stroke-width="2.2"/><polygon points="470,98.8 474.8,98.8 474.8,94" fill="#000"/><rect x="502" y="85" width="6" height="14" fill="#000"/><rect x="503.3" y="86.3" width="3.4" height="2.8" fill="#fff"/><rect x="503.3" y="90.8" width="3.4" height="2.8" fill="#fff"/><rect x="503.3" y="95.3" width="3.4" height="2.8" fill="#fff"/><path d="M510,87.5 h2 m1,0 h2 m1,-0.6 h3 m1.5,0 h1.2 M510,92 h2.6 m1.6,0 h1.6 m1.6,0 h2 m1.6,0 h1.4 M510.6,96.4 h2 m1.4,0 h2 m1.4,0 h1.8 m1.5,0 h2" stroke="#000" stroke-width="1.5" fill="none"/><path d="M503,104.8 H517" stroke="#000" stroke-width="1.2"/><polygon points="502.2,104.8 505,103 505,106.6" fill="#000"/><rect x="516" y="103.2" width="0.9" height="3.2" fill="#000"/><rect x="517.5" y="102.8" width="8.5" height="3.8" rx="0.8" fill="#000"/><rect x="538.8" y="85.4" width="18" height="10.6" fill="#fff" stroke="#000" stroke-width="1.7"/><rect x="556.4" y="86.4" width="1.3" height="9" fill="#000"/><path d="M541,92.5 L542.5,88.5 L544.5,92.5 L546.5,88.5 L548.5,92.5 L550.5,88.5 L553,92.5" stroke="#aaa" stroke-width="0.9" fill="none"/><rect x="540.5" y="96.5" width="16" height="3.6" fill="#000"/><rect x="544.5" y="97.6" width="1.5" height="1.4" fill="#fff"/><rect x="548" y="97.6" width="1.5" height="1.4" fill="#fff"/><rect x="539.5" y="100.4" width="18" height="1.6" fill="#000"/><path d="M538,106.5 H550" stroke="#000" stroke-width="1.2"/><polygon points="537,106.5 539.8,104.7 539.8,108.3" fill="#000"/><rect x="549.5" y="104.8" width="0.9" height="3.2" fill="#000"/><rect x="551" y="104.2" width="9.3" height="3.8" rx="0.8" fill="#000"/><rect x="571" y="93.6" width="4.4" height="1.3" fill="#000"/><rect x="571" y="96.2" width="4.4" height="1.3" fill="#000"/><path d="M584.2,88.6 Q582.6,87.2 581.2,88.6 Q580.2,89.8 579.8,92.5 L578.2,101.2 Q577.6,103.4 575.8,102.8" stroke="#000" stroke-width="1.9" fill="none"/><path d="M577.4,93 H582.6" stroke="#000" stroke-width="1.5"/><path d="M587.2,91 Q585.2,95.8 587.2,100.6 M593.6,91 Q595.6,95.8 593.6,100.6 M588.8,93.8 L592,98 M592,93.8 L588.8,98" stroke="#222" stroke-width="1.1" fill="none"/><rect x="608.5" y="84.3" width="18" height="17.7" rx="2" fill="#a8a8a8"/><rect x="610.5" y="86.5" width="13.5" height="10" fill="#f6f6f6"/><line x1="612.20" y1="88.20" x2="615.20" y2="88.20" stroke="#8a8a8a" stroke-width="1.3"/><line x1="615.20" y1="88.20" x2="615.20" y2="91.70" stroke="#8a8a8a" stroke-width="1.3"/><line x1="612.20" y1="91.70" x2="615.20" y2="91.70" stroke="#8a8a8a" stroke-width="1.3"/><line x1="615.20" y1="91.70" x2="615.20" y2="95.20" stroke="#8a8a8a" stroke-width="1.3"/><line x1="612.20" y1="95.20" x2="615.20" y2="95.20" stroke="#8a8a8a" stroke-width="1.3"/><line x1="616.60" y1="88.20" x2="619.60" y2="88.20" stroke="#8a8a8a" stroke-width="1.3"/><line x1="619.60" y1="88.20" x2="619.60" y2="91.70" stroke="#8a8a8a" stroke-width="1.3"/><line x1="616.60" y1="91.70" x2="619.60" y2="91.70" stroke="#8a8a8a" stroke-width="1.3"/><line x1="616.60" y1="91.70" x2="616.60" y2="95.20" stroke="#8a8a8a" stroke-width="1.3"/><line x1="616.60" y1="95.20" x2="619.60" y2="95.20" stroke="#8a8a8a" stroke-width="1.3"/><line x1="622.80" y1="88.20" x2="622.80" y2="91.70" stroke="#8a8a8a" stroke-width="1.3"/><line x1="622.80" y1="91.70" x2="622.80" y2="95.20" stroke="#8a8a8a" stroke-width="1.3"/><path d="M612,99.2 h12" stroke="#eee" stroke-width="1.2" stroke-dasharray="1.5,3"/><path d="M607,106.4 H618" stroke="#a8a8a8" stroke-width="1.2"/><polygon points="606,106.4 609,104.6 609,108.2" fill="#a8a8a8"/><rect x="618.3" y="104.5" width="10.7" height="4" fill="#a8a8a8"/><rect x="642" y="86" width="2.4" height="6" fill="#a8a8a8"/><polygon points="642,92 644.4,92 643.2,94" fill="#a8a8a8"/><rect x="658" y="86" width="2.4" height="6" fill="#a8a8a8"/><polygon points="658,92 660.4,92 659.2,94" fill="#a8a8a8"/><rect x="648" y="89" width="8.5" height="1.3" fill="#a8a8a8"/><path d="M640.8,101.5 C642,95 646.8,93 648.2,100 C649.6,108 653.6,108 655,100 C656.4,93 661.8,95 663.2,103" stroke="#a8a8a8" stroke-width="1.3" fill="none"/><path d="M675.6,93 V86 H696 V93" stroke="#a8a8a8" stroke-width="2.2" fill="none"/><polygon points="674.5,86 678.5,86 674.5,92" fill="#a8a8a8"/><polygon points="697,86 693,86 697,92" fill="#a8a8a8"/><path d="M675.2,103.5 L676.6,96.2 L678.8,106.8 L681.0,96.2 L683.2,106.8 L685.4,96.2 L687.6,106.8 L689.8,96.2 L692.0,106.8 L694.2,96.2 L696.4,103.5" stroke="#a8a8a8" stroke-width="1.2" fill="none"/><rect x="710" y="85.6" width="12.6" height="11.6" fill="#fff" stroke="#000" stroke-width="1.6"/><rect x="722" y="86.5" width="2" height="11.5" fill="#000"/><rect x="711" y="97" width="12" height="2" fill="#000"/><text x="716.3" y="95" font-family="Liberation Sans" font-weight="bold" font-size="8" fill="#000" text-anchor="middle" style="text-rendering:geometricPrecision">12</text><polygon points="723,92.6 729,92.6 733,96.8 733,102.6 729,106.4 723,106.4 719,102.6 719,96.8" fill="#fff" stroke="#000" stroke-width="1.6"/><path d="M725.8,95.5 V100.6 H729" stroke="#000" stroke-width="1.5" fill="none"/><defs><pattern id="chk" x="0" y="0" width="2.4" height="2.4" patternUnits="userSpaceOnUse"><rect width="2.4" height="2.4" fill="#34b050"/><rect width="1.2" height="1.2" fill="#e4fbe8"/><rect x="1.2" y="1.2" width="1.2" height="1.2" fill="#cdeed4"/></pattern></defs><ellipse cx="756.4" cy="100" rx="9.2" ry="8" fill="url(#chk)" stroke="#000" stroke-width="1.7"/><polygon points="752.8,86 760.2,86 758.2,89.2 754.8,89.2" fill="#000"/><rect x="755.6" y="88.6" width="1.9" height="10.5" fill="#000"/><rect x="754.4" y="98" width="4.3" height="2.6" rx="1" fill="#000"/><path d="M745.4,89.6 L749.6,93.6 M767.6,89.6 L763.4,93.6" stroke="#000" stroke-width="3" stroke-linecap="round"/><rect x="792.0999999999999" y="86.6" width="16.6" height="9" fill="#fff" stroke="#000" stroke-width="1.4"/><path d="M794.0,92 L796.3,89.8 L799.8,93.3 L805.3,88.8" stroke="#000" stroke-width="1" fill="none"/><rect x="790.4" y="96.4" width="20" height="10" rx="2" fill="#000"/><rect x="791.8" y="97.8" width="16.5" height="1.3" fill="#fff"/><rect x="791.8" y="100.8" width="16.5" height="2.2" fill="#fff"/><rect x="792.8" y="104.6" width="14.5" height="1" fill="#ddd"/><path d="M809.8,94.5 L813.3,97 V102 L810.3,105.5" stroke="#000" stroke-width="1.6" fill="#fff"/><polygon points="829.7,86.6 844.7,86.6 842.7,95.5 827.7,95.5" fill="#fff" stroke="#000" stroke-width="1.4"/><path d="M832.0,89.6 H840.2 M831.2,92.5 H839.7" stroke="#000" stroke-width="1.1"/><rect x="824.8000000000001" y="96.4" width="20" height="10" rx="2" fill="#000"/><rect x="826.2" y="97.8" width="16.5" height="1.3" fill="#fff"/><rect x="826.2" y="100.8" width="16.5" height="2.2" fill="#fff"/><rect x="827.2" y="104.6" width="14.5" height="1" fill="#ddd"/><path d="M844.2,94.5 L847.7,97 V102 L844.7,105.5" stroke="#000" stroke-width="1.6" fill="#fff"/><path d="M871.6,93 V87.5 Q872.6,84.5 873.6,87.5 V92 Q875,95.5 876.4,92 V87.5 Q877.6,84.5 878.8,87.5 V92 Q880.2,95.5 881.6,92 V87.5 Q882.8,84.5 884,87.5 V92 Q885.4,95.5 886.8,92 V87.5 Q888,84.5 889.2,87.5 V92 Q890.5,95.5 891.8,92 V87.5 Q892.6,85 893.2,88 V93.5" stroke="#000" stroke-width="1.3" fill="none"/><circle cx="885.8" cy="97.6" r="5" fill="#f2f2f2" stroke="#000" stroke-width="1.4"/><path d="M889.8,101.8 L894.5,106.3" stroke="#000" stroke-width="2.8"/><path d="M906.2,94.5 V91 Q907,86 910,86 Q913,86 914,91 L915.6,94.2 M918.3,91.5 Q919.5,86 922,86 Q924.8,86 926,91 V93.8 M926,94.4 H929.6" stroke="#000" stroke-width="1.3" fill="none"/><circle cx="920.8" cy="97.6" r="5.2" fill="#f2f2f2" stroke="#000" stroke-width="1.4"/><path d="M925,101.8 L929.5,106.3" stroke="#000" stroke-width="2.8"/><path d="M954.4,86.8 H975.2 V95.4 H963 L957.2,101.8 V95.4 H954.4 Z" fill="#fff" stroke="#000" stroke-width="1.6" stroke-linejoin="round"/><path d="M957,89.5 L958.6,89.8 L958.5,92.5 M961.5,92.5 L962.6,89.4 M964.2,92.5 L965.5,89.4 M968,89.5 L972,92.3 H968.5" stroke="#000" stroke-width="1.2" fill="none"/></svg>
<div class="t" style="left:42.85px;top:13.54px;font-size:19.13px;color:#8a8a8a;transform:scaleX(0.8466)">GOSSEN METRAWATT</div>
<div class="t" style="left:256.61px;top:13.54px;font-size:19.13px;color:#8a8a8a;transform:scaleX(0.8933)">METRAwin 10</div>
<div class="t" style="left:404.26px;top:13.54px;font-size:19.13px;color:#8a8a8a;transform:scaleX(0.9375)">Registered for: Notebookcheck</div>
<div class="t" style="left:11.61px;top:52.41px;font-size:18.70px;color:#72727c;transform:scaleX(0.8862)">File</div>
<div class="t" style="left:59.57px;top:52.41px;font-size:18.70px;color:#72727c;transform:scaleX(0.9258)">Edit</div>
<div class="t" style="left:111.00px;top:52.41px;font-size:18.70px;color:#72727c;transform:scaleX(0.9100)">View</div>
<div class="t" style="left:169.08px;top:52.41px;font-size:18.70px;color:#72727c;transform:scaleX(0.9179)">Device</div>
<div class="t" style="left:242.63px;top:52.41px;font-size:18.70px;color:#72727c;transform:scaleX(0.9746)">Options</div>
<div class="t" style="left:326.34px;top:52.41px;font-size:18.70px;color:#72727c;transform:scaleX(0.9649)">Help</div>
<div class="t" style="left:8.70px;top:124.99px;font-size:18.84px;color:#1e1e1e;transform:scaleX(0.8063);-webkit-text-stroke:0.12px #f0f0f0">Trig: OFF</div>
<div class="t" style="left:7.24px;top:147.49px;font-size:18.84px;color:#1e1e1e;transform:scaleX(0.8569);-webkit-text-stroke:0.12px #f0f0f0">Chan:  123456789</div>
<div class="t" style="left:343.56px;top:124.99px;font-size:18.84px;color:#1e1e1e;transform:scaleX(0.8357);-webkit-text-stroke:0.12px #f0f0f0">Status:</div>
<div class="t" style="left:406.16px;top:124.99px;font-size:18.84px;color:#1e1e1e;transform:scaleX(0.8418);-webkit-text-stroke:0.12px #f0f0f0">Browsing Data</div>
<div class="t" style="left:343.53px;top:147.53px;font-size:18.55px;color:#1e1e1e;transform:scaleX(0.8651);-webkit-text-stroke:0.12px #f0f0f0">Records: 299</div>
<div class="t" style="left:451.76px;top:147.53px;font-size:18.55px;color:#1e1e1e;transform:scaleX(0.9176);-webkit-text-stroke:0.12px #f0f0f0">Intrv. 1.0</div>
<div class="t" style="left:61.03px;top:191.24px;font-size:19.13px;color:#1e1e1e;transform:scaleX(0.8733);-webkit-text-stroke:0.12px #ffffff">600</div>
<div class="t" style="left:139.00px;top:191.24px;font-size:19.13px;color:#1e1e1e;transform:scaleX(0.9444);-webkit-text-stroke:0.12px #ffffff">W</div>
<div class="t" style="left:79.34px;top:719.59px;font-size:18.84px;color:#1e1e1e;transform:scaleX(0.8556);-webkit-text-stroke:0.12px #ffffff">0</div>
<div class="t" style="left:139.20px;top:719.59px;font-size:18.84px;color:#1e1e1e;transform:scaleX(0.9111);-webkit-text-stroke:0.12px #ffffff">W</div>
<div class="t" style="left:104.71px;top:754.90px;font-size:18.12px;color:#1e1e1e;transform:scaleX(0.8854);-webkit-text-stroke:0.12px #ffffff">HH:MM:SS</div>
<div class="t" style="left:290.81px;top:754.90px;font-size:18.12px;color:#1e1e1e;transform:scaleX(0.8928);-webkit-text-stroke:0.12px #ffffff">00:00:30</div>
<div class="t" style="left:397.20px;top:754.90px;font-size:18.12px;color:#1e1e1e;transform:scaleX(0.9000);-webkit-text-stroke:0.12px #ffffff">00:01:00</div>
<div class="t" style="left:503.30px;top:754.90px;font-size:18.12px;color:#1e1e1e;transform:scaleX(0.9000);-webkit-text-stroke:0.12px #ffffff">00:01:30</div>
<div class="t" style="left:609.40px;top:754.90px;font-size:18.12px;color:#1e1e1e;transform:scaleX(0.9000);-webkit-text-stroke:0.12px #ffffff">00:02:00</div>
<div class="t" style="left:715.50px;top:754.90px;font-size:18.12px;color:#1e1e1e;transform:scaleX(0.9000);-webkit-text-stroke:0.12px #ffffff">00:02:30</div>
<div class="t" style="left:821.60px;top:754.90px;font-size:18.12px;color:#1e1e1e;transform:scaleX(0.9000);-webkit-text-stroke:0.12px #ffffff">00:03:00</div>
<div class="t" style="left:927.70px;top:754.90px;font-size:18.12px;color:#1e1e1e;transform:scaleX(0.9000);-webkit-text-stroke:0.12px #ffffff">00:03:30</div>
<div class="t" style="left:1033.80px;top:754.90px;font-size:18.12px;color:#1e1e1e;transform:scaleX(0.9000);-webkit-text-stroke:0.12px #ffffff">00:04:00</div>
<div class="t" style="left:1139.90px;top:754.90px;font-size:18.12px;color:#1e1e1e;transform:scaleX(0.9000);-webkit-text-stroke:0.12px #ffffff">00:04:30</div>
<div class="t" style="left:12.17px;top:793.53px;font-size:18.55px;color:#1e1e1e;transform:scaleX(0.8333);-webkit-text-stroke:0.12px #ffffff">Channel:</div>
<div class="t" style="left:131.63px;top:793.90px;font-size:18.12px;color:#1e1e1e;transform:scaleX(0.8688);-webkit-text-stroke:0.12px #ffffff">Min:</div>
<div class="t" style="left:245.50px;top:793.90px;font-size:18.12px;color:#1e1e1e;transform:scaleX(0.9100);-webkit-text-stroke:0.12px #ffffff">Avr:</div>
<div class="t" style="left:356.94px;top:793.90px;font-size:18.12px;color:#1e1e1e;transform:scaleX(0.8622);-webkit-text-stroke:0.12px #ffffff">Max:</div>
<div class="t" style="left:425.33px;top:793.90px;font-size:18.12px;color:#1e1e1e;transform:scaleX(0.8745);-webkit-text-stroke:0.12px #ffffff">Curs: « 00:00:07 (-04:57)</div>
<div class="t" style="left:21.22px;top:820.40px;font-size:20.00px;color:#1e1e1e;transform:scaleX(0.5778);-webkit-text-stroke:0.12px #ffffff">1</div>
<div class="t" style="left:52.62px;top:820.40px;font-size:20.00px;color:#1e1e1e;transform:scaleX(0.7786);-webkit-text-stroke:0.12px #ffffff">M</div>
<div class="t" style="left:109.38px;top:820.45px;font-size:19.71px;color:#1e1e1e;transform:scaleX(0.8237);-webkit-text-stroke:0.12px #ffffff">267.15</div>
<div class="t" style="left:223.43px;top:820.45px;font-size:19.71px;color:#1e1e1e;transform:scaleX(0.7729);-webkit-text-stroke:0.12px #ffffff">272.21</div>
<div class="t" style="left:337.27px;top:820.45px;font-size:19.71px;color:#1e1e1e;transform:scaleX(0.8254);-webkit-text-stroke:0.12px #ffffff">276.82</div>
<div class="t" style="left:450.29px;top:820.45px;font-size:19.71px;color:#1e1e1e;transform:scaleX(0.8085);-webkit-text-stroke:0.12px #ffffff">271.80</div>
<div class="t" style="left:566.88px;top:820.45px;font-size:19.71px;color:#1e1e1e;transform:scaleX(0.8237);-webkit-text-stroke:0.12px #ffffff">271.06</div>
<div class="t" style="left:630.50px;top:820.45px;font-size:19.71px;color:#1e1e1e;transform:scaleX(0.8053);-webkit-text-stroke:0.12px #ffffff">W</div>
<div class="t" style="left:703.40px;top:820.45px;font-size:19.71px;color:#1e1e1e;transform:scaleX(0.8015);-webkit-text-stroke:0.12px #ffffff">-000.74</div>
<div class="t" style="left:1072.09px;top:972.49px;font-size:18.84px;color:#1a1a2a;transform:scaleX(0.9097)">METRAHit Starline-Seri</div>
</body></html>
